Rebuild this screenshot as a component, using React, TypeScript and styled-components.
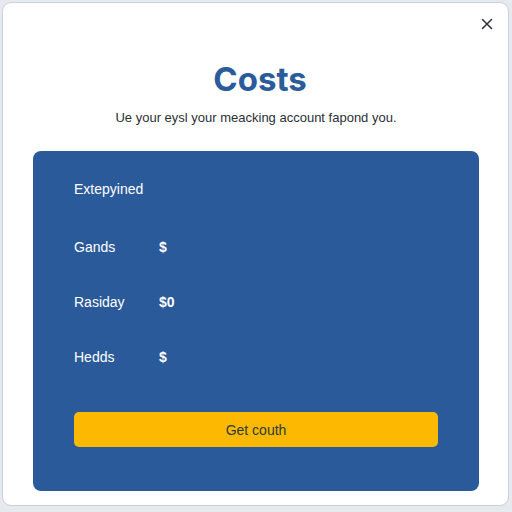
import React from "react";
import styled, { createGlobalStyle } from "styled-components";

const GlobalStyle = createGlobalStyle`
  html, body {
    margin: 0;
    padding: 0;
    background: #e6e9ed;
    font-family: "Liberation Sans", Arial, sans-serif;
  }
  * { box-sizing: border-box; }
`;

const Modal = styled.div`
  position: relative;
  margin: 2px 0 0 2px;
  width: 507px;
  height: 504px;
  background: #ffffff;
  border: 1px solid #c9d1da;
  border-radius: 9px;
  display: flex;
  flex-direction: column;
  align-items: stretch;
  padding: 56px 29px 0 30px;
`;

const CloseButton = styled.button`
  position: absolute;
  top: 12px;
  right: 12px;
  width: 18px;
  height: 18px;
  padding: 0;
  border: none;
  background: transparent;
  display: flex;
  align-items: center;
  justify-content: center;
  cursor: pointer;
`;

const Title = styled.h1`
  margin: 0;
  padding-left: 8px;
  font-family: Inter, "Open Sans", sans-serif;
  font-size: 33px;
  line-height: 40px;
  font-weight: 700;
  color: #2a5b9b;
  text-align: center;
`;

const Subtitle = styled.p`
  margin: 9px 0 0;
  font-size: 13px;
  line-height: 20px;
  color: #2b2f35;
  text-align: center;
`;

const Panel = styled.section`
  margin-top: 23px;
  background: #2a5a99;
  border-radius: 8px;
  padding: 25px 41px 44px;
  display: flex;
  flex-direction: column;
`;

const PanelHeading = styled.div`
  height: 26px;
  display: flex;
  align-items: center;
  font-size: 14px;
  color: #ffffff;
`;

const Row = styled.div<{ $first?: boolean }>`
  height: 26px;
  margin-top: ${(p) => (p.$first ? "32px" : "29px")};
  display: grid;
  grid-template-columns: 85px auto;
  align-items: center;
  font-size: 14px;
  color: #ffffff;
`;

const Value = styled.span`
  font-weight: 700;
`;

const ActionButton = styled.button`
  margin-top: 42px;
  height: 35px;
  border: none;
  border-radius: 5px;
  background: #fdb902;
  color: #283c3a;
  font-family: "Liberation Sans", Arial, sans-serif;
  font-size: 14px;
  cursor: pointer;
`;

const rows = [
  { label: "Gands", value: "$" },
  { label: "Rasiday", value: "$0" },
  { label: "Hedds", value: "$" },
];

export default function App() {
  return (
    <>
      <GlobalStyle />
      <Modal>
        <CloseButton aria-label="Close">
          <svg width="12" height="12" viewBox="0 0 12 12">
            <path d="M1.5 1.5 L10.5 10.5 M10.5 1.5 L1.5 10.5" stroke="#2b2f35" strokeWidth="1.5" strokeLinecap="round" />
          </svg>
        </CloseButton>
        <Title>Costs</Title>
        <Subtitle>Ue your eysl your meacking account fapond you.</Subtitle>
        <Panel>
          <PanelHeading>Extepyined</PanelHeading>
          {rows.map((r, i) => (
            <Row key={r.label} $first={i === 0}>
              <span>{r.label}</span>
              <Value>{r.value}</Value>
            </Row>
          ))}
          <ActionButton>Get couth</ActionButton>
        </Panel>
      </Modal>
    </>
  );
}
